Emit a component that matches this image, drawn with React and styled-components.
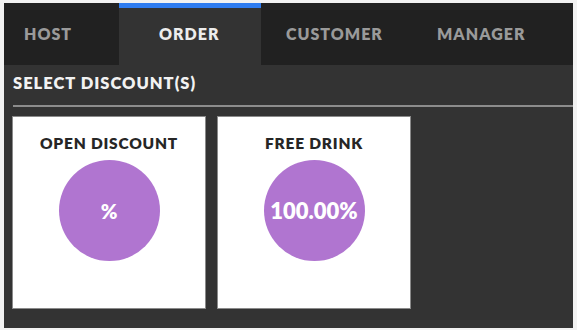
import React, { useState } from 'react';
import styled, { createGlobalStyle } from 'styled-components';

const GlobalStyle = createGlobalStyle`
  html, body {
    margin: 0;
    padding: 0;
    background: #f2f2f2;
  }
  body {
    font-family: Lato, "Open Sans", Arial, sans-serif;
  }
`;

const tabs = [
  { name: 'HOST', w: 115, pl: 20 },
  { name: 'ORDER', w: 142, pl: 40 },
  { name: 'CUSTOMER', w: 151, pl: 25 },
  { name: 'MANAGER', w: 160, pl: 25 },
];

const discounts = [
  { title: 'OPEN DISCOUNT', value: '%', small: true },
  { title: 'FREE DRINK', value: '100.00%' },
];

function App() {
  const [active, setActive] = useState('ORDER');

  return (
    <Frame>
      <GlobalStyle />
      <Screen>
        <TabBar>
          {tabs.map((t) => (
            <Tab
              key={t.name}
              $w={t.w}
              $pl={t.pl}
              $active={active === t.name}
              onClick={() => setActive(t.name)}
            >
              {t.name}
            </Tab>
          ))}
        </TabBar>
        <Content>
          <Heading>SELECT DISCOUNT(S)</Heading>
          <Divider />
          <CardGrid>
            {discounts.map((d) => (
              <Card key={d.title}>
                <CardTitle>{d.title}</CardTitle>
                <Badge $small={d.small}>{d.value}</Badge>
              </Card>
            ))}
          </CardGrid>
        </Content>
      </Screen>
    </Frame>
  );
}

const Frame = styled.div`
  width: 577px;
  height: 330px;
  padding: 3px 4px 2px 4px;
  box-sizing: border-box;
`;

const Screen = styled.div`
  height: 100%;
  background: #333333;
  display: flex;
  flex-direction: column;
`;

const TabBar = styled.div`
  display: flex;
  height: 62px;
  background: #212121;
`;

const Tab = styled.div`
  width: ${(p) => p.$w}px;
  padding-left: ${(p) => p.$pl}px;
  box-sizing: border-box;
  display: flex;
  align-items: center;
  font-size: 16px;
  font-weight: 800;
  letter-spacing: 1px;
  color: ${(p) => (p.$active ? '#ececec' : '#9a9a9a')};
  background: ${(p) => (p.$active ? '#333333' : 'transparent')};
  border-top: 5px solid ${(p) => (p.$active ? '#2e7cf0' : 'transparent')};
  padding-bottom: 7px;
  cursor: pointer;
`;

const Content = styled.div`
  padding: 0 0 0 8px;
`;

const Heading = styled.div`
  height: 40px;
  display: flex;
  align-items: center;
  padding-left: 1px;
  padding-bottom: 4px;
  box-sizing: border-box;
  font-size: 16.5px;
  font-weight: 800;
  letter-spacing: 1px;
  color: #f2f2f2;
`;

const Divider = styled.div`
  height: 2px;
  background: #8c8c8c;
  margin-left: 1px;
`;

const CardGrid = styled.div`
  display: flex;
  gap: 11px;
  padding-top: 9px;
`;

const Card = styled.div`
  width: 194px;
  height: 193px;
  box-sizing: border-box;
  background: #ffffff;
  border: 1px solid #8a8a8a;
  display: flex;
  flex-direction: column;
  align-items: center;
`;

const CardTitle = styled.div`
  margin-top: 17px;
  font-size: 15.5px;
  font-weight: 800;
  letter-spacing: 0.8px;
  color: #262626;
  line-height: 18px;
`;

const Badge = styled.div`
  margin-top: 8px;
  width: 101px;
  height: 101px;
  border-radius: 50%;
  background: #b075d0;
  display: flex;
  align-items: center;
  justify-content: center;
  color: #ffffff;
  font-weight: 800;
  font-size: ${(p) => (p.$small ? '20px' : '22px')};
`;

export default App;
